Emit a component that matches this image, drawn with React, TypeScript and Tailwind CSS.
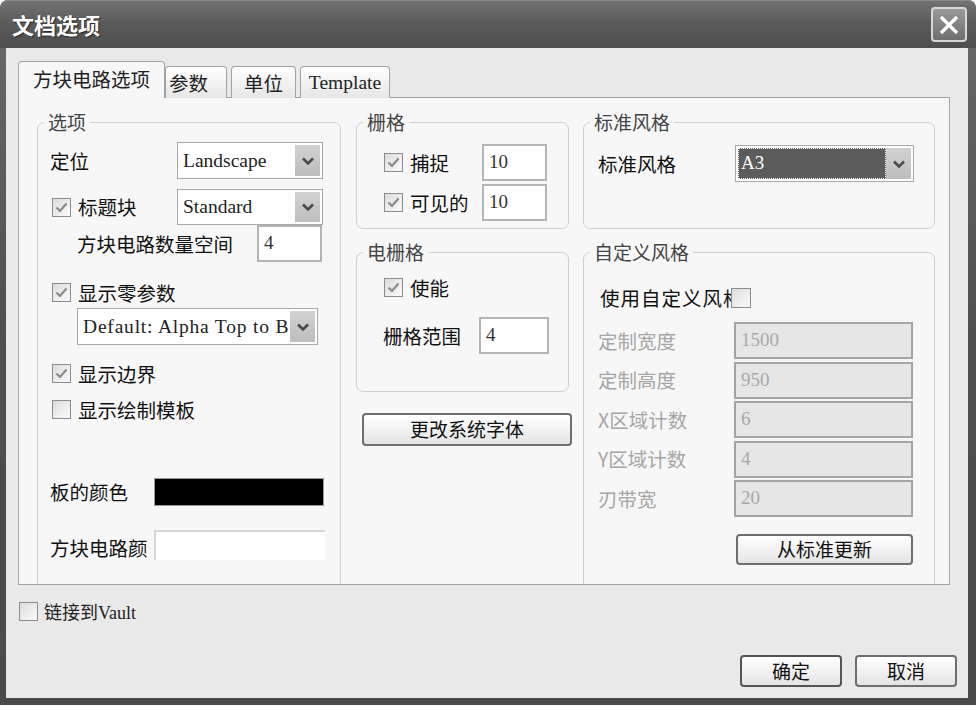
import type { ReactNode } from "react";

const cjk = "font-['Noto_Sans_CJK_SC','Noto_Sans',sans-serif]";
const serif = "font-['Liberation_Serif','Noto_Sans_CJK_SC',serif]";

function Chevron() {
  return (
    <svg width="14" height="10" viewBox="0 0 14 10">
      <path d="M2 2.5 L7 7.5 L12 2.5" fill="none" stroke="#4a4a4a" strokeWidth="2.6" />
    </svg>
  );
}

function Check({ on }: { on?: boolean }) {
  return (
    <span className="flex h-[19px] w-[19px] shrink-0 items-center justify-center border border-[#8c8c8c] bg-gradient-to-br from-[#dcdcdc] to-[#fbfbfb]">
      {on && (
        <svg width="13" height="11" viewBox="0 0 13 11">
          <path d="M1.5 5.5 L5 9 L11.5 1.5" fill="none" stroke="#8a8a8a" strokeWidth="2.2" />
        </svg>
      )}
    </span>
  );
}

function Select({ value, w, h = "h-[37px]", dark, wide }: { value: string; w: string; h?: string; dark?: boolean; wide?: boolean }) {
  return (
    <div className={`flex ${w} ${h} shrink-0 items-stretch border border-[#a9a9a9] bg-white p-[2px]`}>
      {dark ? (
        <div className="flex flex-1 items-center border border-dotted border-white bg-[#5c5c5c] pl-[2px] text-[19px] text-white">
          <span className={`${serif} overflow-hidden whitespace-nowrap`}>{value}</span>
        </div>
      ) : (
        <div
          className={`${serif} flex flex-1 items-center overflow-hidden whitespace-nowrap pl-[3px] text-[19.5px] text-[#222] ${
            wide ? "tracking-[0.8px]" : ""
          }`}
        >
          {value}
        </div>
      )}
      <div className="flex w-[25px] shrink-0 items-center justify-center bg-gradient-to-b from-[#d2d2d2] to-[#bdbdbd]">
        <Chevron />
      </div>
    </div>
  );
}

function Input({ value, w, disabled }: { value: string; w: string; disabled?: boolean }) {
  return (
    <div
      className={`${serif} flex ${w} h-[37px] shrink-0 items-center border-2 pl-[5px] text-[19px] ${
        disabled ? "border-[#a4a4a4] bg-[#e6e6e6] text-[#a8a8a8]" : "border-[#b4b4b4] bg-white text-[#333]"
      }`}
    >
      {value}
    </div>
  );
}

function Group({ title, className, children }: { title: string; className: string; children: ReactNode }) {
  return (
    <fieldset className={`shrink-0 rounded-[7px] border border-[#cfcfcf] ${className}`}>
      <legend className={`${cjk} ml-[6px] px-[4px] text-[19px] leading-[22px] text-[#444]`}>{title}</legend>
      {children}
    </fieldset>
  );
}

function Btn({ label, w, h, strong }: { label: string; w: string; h: string; strong?: boolean }) {
  return (
    <div
      className={`${cjk} flex ${w} ${h} items-center justify-center rounded-[4px] border-2 bg-gradient-to-b from-white to-[#e4e4e4] text-[19px] text-[#111] ${
        strong ? "border-[#555]" : "border-[#6e6e6e]"
      }`}
    >
      {label}
    </div>
  );
}

const lbl = `${cjk} text-[19.5px] leading-none text-[#111] whitespace-nowrap`;
const dis = `${cjk} text-[19.5px] leading-none text-[#a6a6a6] whitespace-nowrap`;

export default function App() {
  const tabs = [
    { t: "方块电路选项", w: "w-[147px]", active: true },
    { t: "参数", w: "w-[62px]" },
    { t: "单位", w: "w-[65px]" },
    { t: "Template", w: "w-[90px]" },
  ];

  return (
    <div className="h-[717px] w-[976px] bg-white">
      <div className="flex h-[705px] flex-col rounded-t-[8px] bg-gradient-to-b from-[#6a6a6a] via-[#4e4e4e] to-[#4a4a4a]">
        {/* title bar */}
        <div className="flex h-[48px] shrink-0 items-center justify-between rounded-t-[8px] border-t border-[#8a8a8a] bg-gradient-to-b from-[#727272] via-[#5a5a5a] to-[#4f4f4f] pl-[12px] pr-[9px]">
          <span className={`${cjk} text-[22px] font-bold text-white [text-shadow:1px_1px_1px_#222]`}>文档选项</span>
          <div className="flex h-[35px] w-[36px] items-center justify-center rounded-[4px] border-2 border-[#d8d8d8] bg-gradient-to-b from-[#9a9a9a] to-[#6e6e6e]">
            <svg width="22" height="22" viewBox="0 0 22 22">
              <path d="M3 3 L19 19 M19 3 L3 19" stroke="white" strokeWidth="3.2" />
            </svg>
          </div>
        </div>

        {/* client area */}
        <div className="ml-[6px] mr-[8px] flex flex-1 flex-col bg-[#e9e9e9] pt-[14px]">
          {/* tabs */}
          <div className="relative z-10 ml-[12px] flex h-[36px] items-end gap-[4px]">
            {tabs.map((t, i) => (
              <div
                key={t.t}
                className={`${t.t === "Template" ? serif : cjk} flex ${t.w} items-center justify-center rounded-t-[4px] border border-b-0 border-[#a2a2a2] text-[19.5px] text-[#222] ${
                  t.active
                    ? "-mr-[4px] h-[37px] bg-[#f7f7f7] pb-[2px]"
                    : `h-[32px] bg-gradient-to-b from-white to-[#e6e6e6] ${i === 1 ? "justify-start pl-[3px]" : ""}`
                }`}
              >
                {t.t}
              </div>
            ))}
          </div>

          {/* tab panel */}
          <div className="-mt-px ml-[12px] flex h-[488px] w-[932px] overflow-hidden border border-[#a2a2a2] bg-[#f7f7f7] pl-[18px] pt-[13px]">
            {/* left column */}
            <Group title="选项" className="h-[520px] w-[304px]">
              <div className="flex flex-col">
                <div className="mt-[9px] flex h-[37px] items-center">
                  <span className={`${lbl} ml-[12px] w-[127px]`}>定位</span>
                  <Select value="Landscape" w="w-[146px]" />
                </div>
                <div className="mt-[10px] flex h-[36px] items-center">
                  <span className="ml-[14px] flex w-[125px] items-center gap-[7px]">
                    <Check on />
                    <span className={lbl}>标题块</span>
                  </span>
                  <Select value="Standard" w="w-[146px]" h="h-[36px]" />
                </div>
                <div className="flex h-[37px] items-center">
                  <span className={`${lbl} ml-[39px] w-[180px]`}>方块电路数量空间</span>
                  <Input value="4" w="w-[65px]" />
                </div>
                <div className="ml-[14px] mt-[21px] flex h-[19px] items-center gap-[7px]">
                  <Check on />
                  <span className={lbl}>显示零参数</span>
                </div>
                <div className="ml-[39px] mt-[6px]">
                  <Select value="Default: Alpha Top to Bc" w="w-[241px]" wide />
                </div>
                <div className="ml-[14px] mt-[19px] flex h-[19px] items-center gap-[7px]">
                  <Check on />
                  <span className={lbl}>显示边界</span>
                </div>
                <div className="ml-[14px] mt-[17px] flex h-[19px] items-center gap-[7px]">
                  <Check />
                  <span className={lbl}>显示绘制模板</span>
                </div>
                <div className="mt-[59px] flex h-[28px] items-center">
                  <span className={`${lbl} ml-[12px] w-[104px]`}>板的颜色</span>
                  <div className="h-[28px] w-[170px] border border-[#999] bg-black" />
                </div>
                <div className="mt-[24px] flex h-[30px] items-end">
                  <span className={`${lbl} ml-[12px] w-[104px] pb-[3px]`}>方块电路颜</span>
                  <div className="h-[30px] w-[171px] border-l-2 border-t-2 border-[#d6d6d6] bg-white" />
                </div>
              </div>
            </Group>

            {/* middle column */}
            <div className="ml-[15px] flex w-[213px] shrink-0 flex-col">
              <Group title="栅格" className="h-[118px]">
                <div className="mt-[11px] flex h-[37px] items-center">
                  <span className="ml-[27px] flex w-[98px] items-center gap-[7px]">
                    <Check on />
                    <span className={lbl}>捕捉</span>
                  </span>
                  <Input value="10" w="w-[65px]" />
                </div>
                <div className="mt-[3px] flex h-[37px] items-center">
                  <span className="ml-[27px] flex w-[98px] items-center gap-[7px]">
                    <Check on />
                    <span className={lbl}>可见的</span>
                  </span>
                  <Input value="10" w="w-[65px]" />
                </div>
              </Group>
              <Group title="电栅格" className="mt-[12px] h-[151px]">
                <div className="ml-[27px] mt-[15px] flex h-[19px] items-center gap-[7px]">
                  <Check on />
                  <span className={lbl}>使能</span>
                </div>
                <div className="mt-[20px] flex h-[37px] items-center">
                  <span className={`${lbl} ml-[26px] w-[96px]`}>栅格范围</span>
                  <Input value="4" w="w-[70px]" />
                </div>
              </Group>
              <div className="ml-[6px] mt-[21px]">
                <Btn label="更改系统字体" w="w-[210px]" h="h-[33px]" />
              </div>
            </div>

            {/* right column */}
            <div className="ml-[14px] flex w-[352px] shrink-0 flex-col">
              <Group title="标准风格" className="h-[118px]">
                <div className="mt-[12px] flex h-[37px] items-center">
                  <span className={`${lbl} ml-[14px] w-[137px]`}>标准风格</span>
                  <Select value="A3" w="w-[179px]" dark />
                </div>
              </Group>
              <Group title="自定义风格" className="mt-[12px] h-[400px]">
                <div className="mt-[25px] flex h-[20px] items-center">
                  <span className={`${lbl} ml-[16px] w-[131px] overflow-hidden tracking-[1px]`}>使用自定义风格</span>
                  <span className="flex h-[20px] w-[20px] border border-[#8c8c8c] bg-gradient-to-br from-[#dcdcdc] to-[#fbfbfb]" />
                </div>
                <div className="mt-[14px] flex flex-col gap-[2.5px]">
                  {[
                    ["定制宽度", "1500"],
                    ["定制高度", "950"],
                    ["X区域计数", "6"],
                    ["Y区域计数", "4"],
                    ["刃带宽", "20"],
                  ].map(([k, v]) => (
                    <div key={k} className="flex h-[37px] items-center">
                      <span className={`${dis} ml-[14px] w-[136px]`}>{k}</span>
                      <Input value={v} w="w-[179px]" disabled />
                    </div>
                  ))}
                </div>
                <div className="ml-[152px] mt-[17px]">
                  <Btn label="从标准更新" w="w-[177px]" h="h-[31px]" />
                </div>
              </Group>
            </div>
          </div>

          {/* bottom */}
          <div className="ml-[13px] mt-[17px] flex h-[19px] items-center gap-[6px]">
            <Check />
            <span className={`${serif} text-[18px] leading-none text-[#222]`}>
              <span className={cjk}>链接到</span>Vault
            </span>
          </div>
          <div className="mr-[11px] mt-[34px] flex justify-end gap-[13px]">
            <Btn label="确定" w="w-[102px]" h="h-[32px]" strong />
            <Btn label="取消" w="w-[102px]" h="h-[32px]" />
          </div>
        </div>
        <div className="h-[7px] shrink-0" />
      </div>
    </div>
  );
}
